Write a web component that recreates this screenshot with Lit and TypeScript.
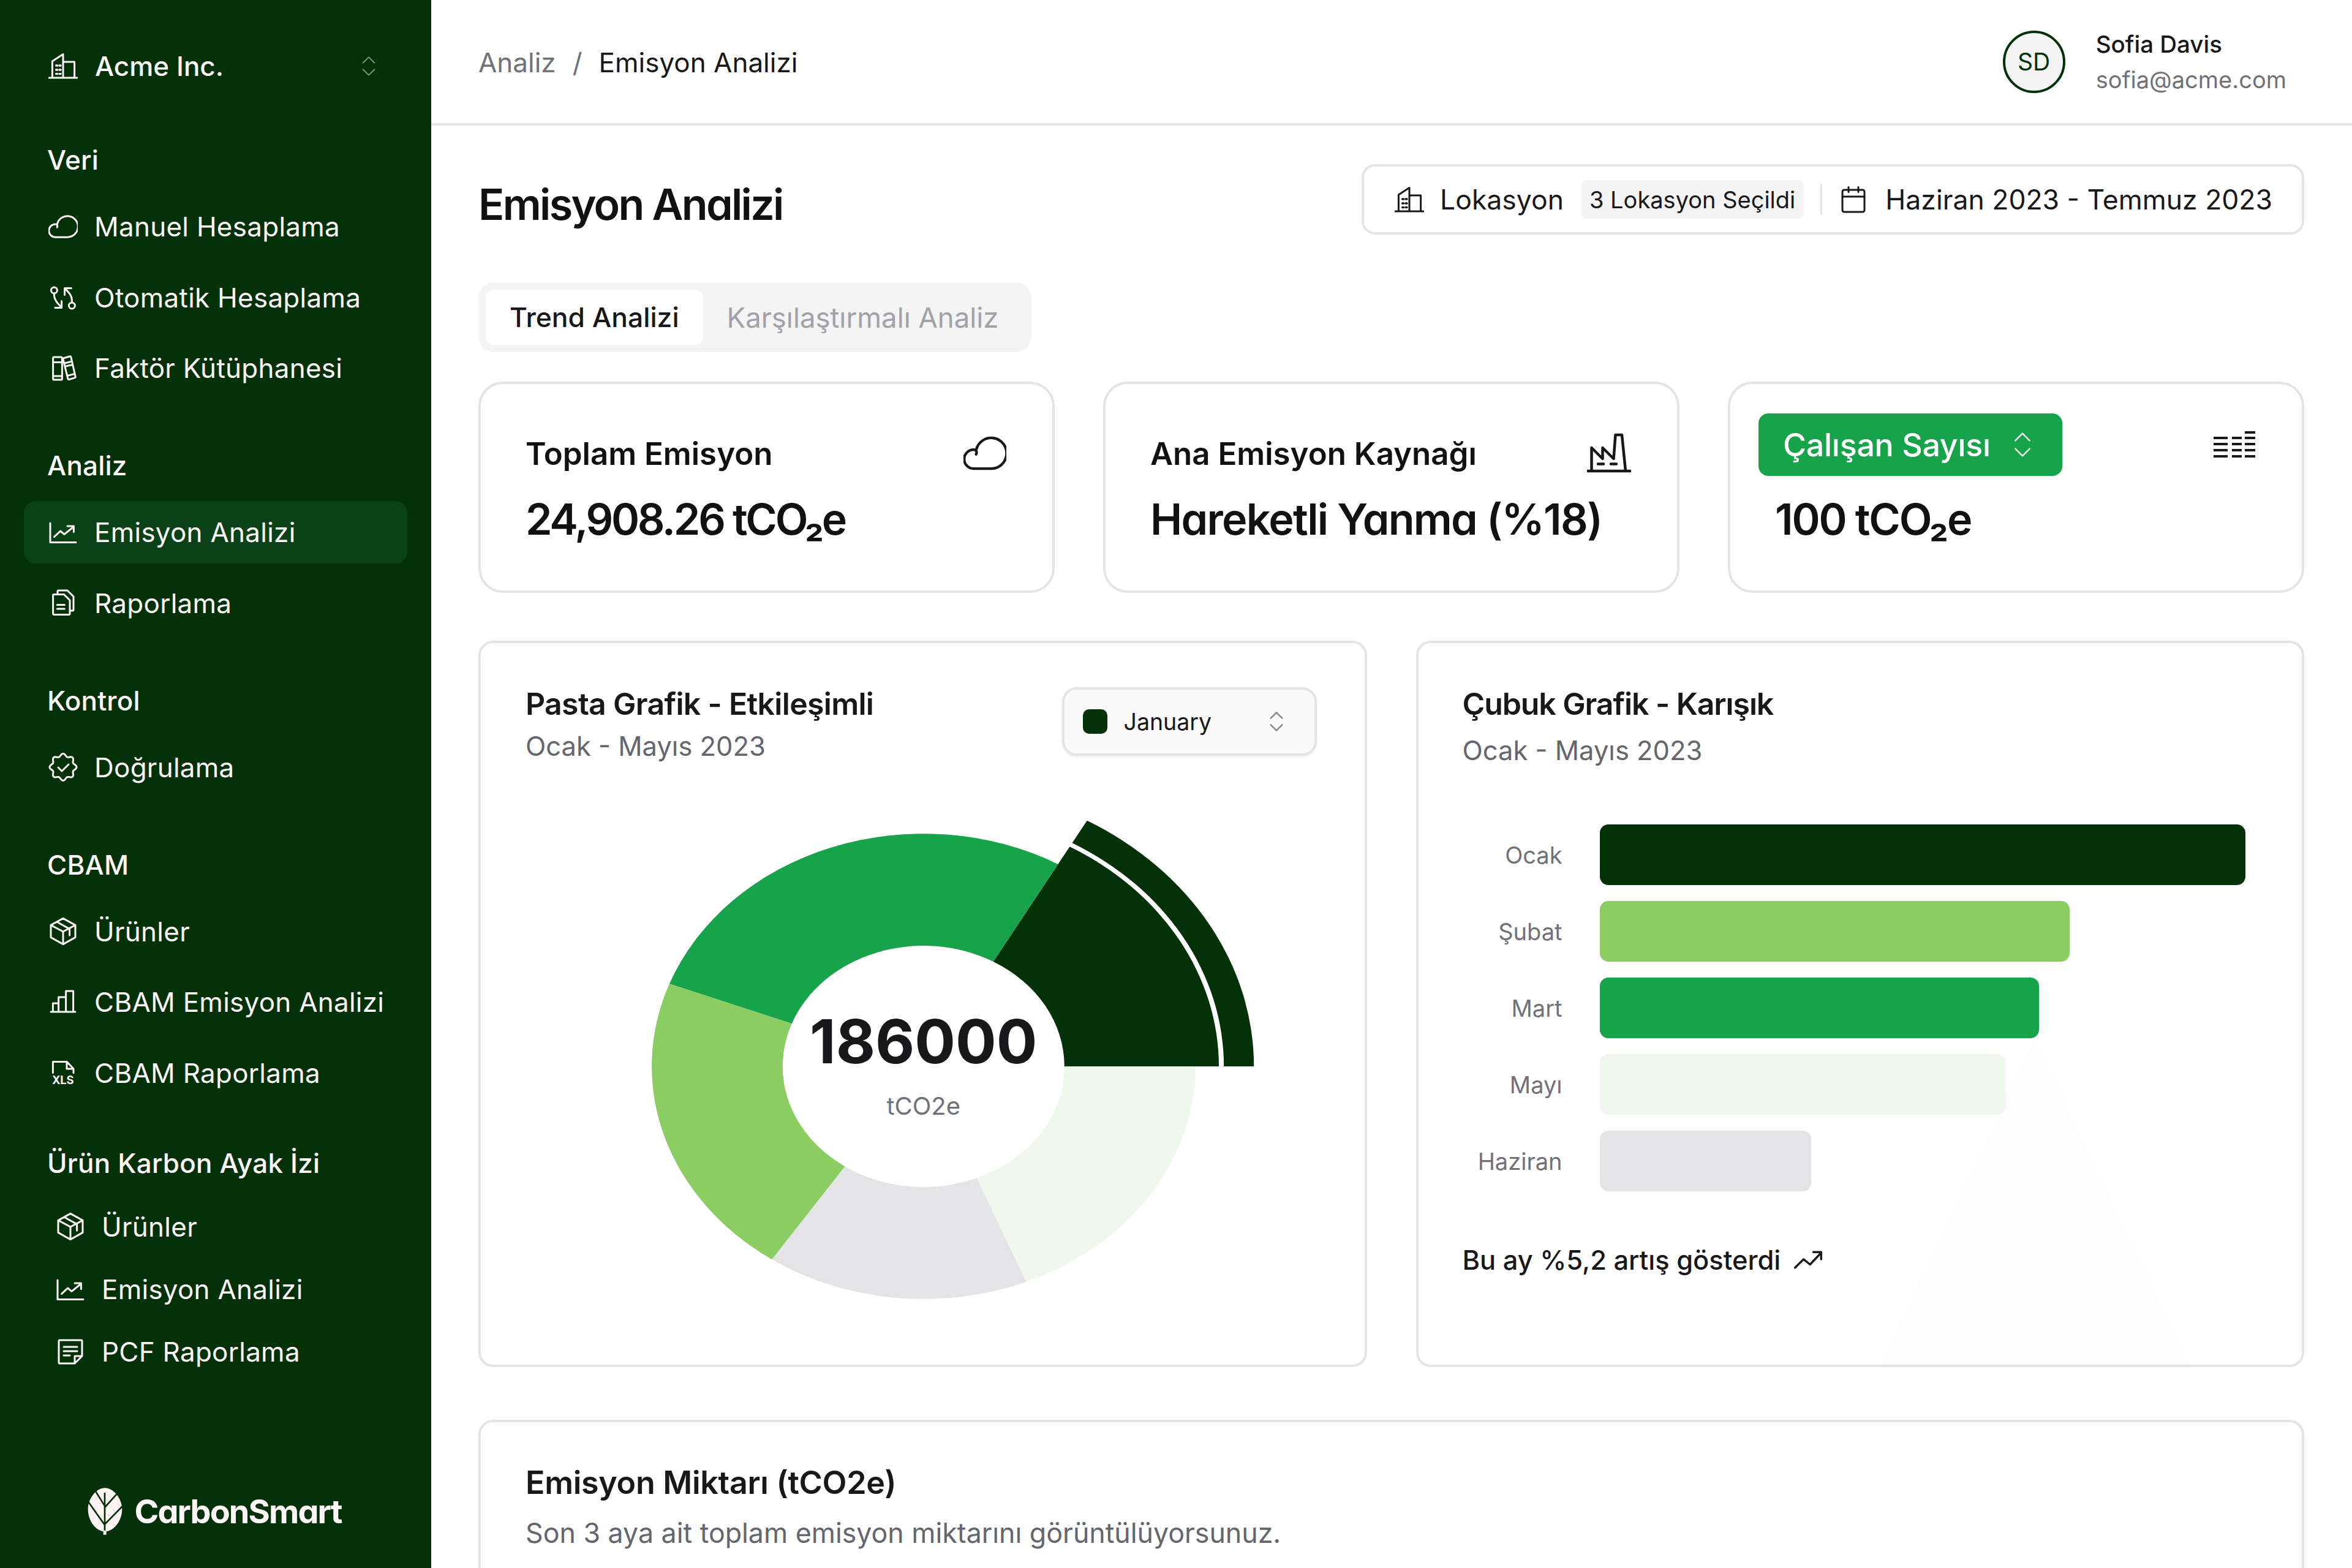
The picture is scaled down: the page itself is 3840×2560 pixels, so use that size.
import { LitElement, html, css, svg } from "lit";
import { customElement } from "lit/decorators.js";

// wavy 8-lobe outline for the verification badge
function badgePath() {
  const pts: string[] = [];
  for (let i = 0; i < 96; i++) {
    const t = (i / 96) * Math.PI * 2;
    const r = 9.9 + 1.1 * Math.cos(8 * t);
    pts.push(`${(12 + r * Math.sin(t)).toFixed(2)} ${(11.7 - r * Math.cos(t)).toFixed(2)}`);
  }
  return `M${pts.join("L")}Z`;
}

const ICONS: Record<string, any> = {
  building: svg`<path d="M.5 21.5h23M3.2 21.5V8L12 2.300v19.200M12 8.500h9.300v13"/><path d="M6.300 11.500h1M9 11.500h1M6.300 15h1M9 15h1M6.300 18.300h1M9 18.300h1" stroke-width="1.700"/>`,
  cloud: svg`<path d="M5.700 20.600h9.800A8.600 8.600 0 1 0 7.200 9.900M5.700 20.600a5.300 5.300 0 0 1 0-10.600c1.500 0 2 1.200 1.400 2.600"/>`,
  flow: svg`<circle cx="4.700" cy="6" r="2.500"/><path d="M4.700 8.500V10c0 4 3.300 7 6.100 10M5.500 20.300h5.300v-5.500"/><circle cx="19.200" cy="18.500" r="2.500"/><path d="M19.200 16v-2c0-4-3.200-7-5.900-9.700M18.700 4.300h-5.400v5.500"/>`,
  books: svg`<rect x="3.800" y="3" width="7.400" height="18.500" rx=".8"/><path d="M3.800 7.200h7.400M3.800 18.500h7.400M12.400 3.900l5.200-1.500q.6-.1.8.4l3.700 16.200q.1.6-.4.8l-4.900 1.500q-.6.1-.8-.4L12 4.700q-.1-.6.400-.8zM13.300 8l6-1.500M13.800 10.600l6-1.500M15.700 18.200l5.600-1.500"/>`,
  chart: svg`<path d="M1.500 4.500V20.200h21M4.800 15.700l5-4.700 3.200 2.700 7-5.700M15.500 7h5.200v4.700"/>`,
  docs: svg`<path d="M4.500 4.800h8.300l4.700 4.700v11a.7.7 0 0 1-.7.7H4.500a.7.7 0 0 1-.7-.7V5.500a.7.7 0 0 1 .7-.7zM7.500 4.800V2.200a.7.7 0 0 1 .7-.7h7.300l5 5v10.800a.7.7 0 0 1-.7.7h-2.300M7.200 13.200h6M7.200 16.500h6"/>`,
  badge: svg`<path d=${badgePath()}/><path d="M8 12l3 3 5.500-5.500"/>`,
  box: svg`<path d="M12 1.200 22 6.700v10L12 22.300 2 16.700v-10zM2 6.700 12 12l10-5.300M12 12v10.300M6.800 4l10.500 5.800V15"/>`,
  bars: svg`<path d="M2 20h20M3.700 20v-7h4.600v7M8.300 20V8h6v12M14.300 20V3h6v17"/>`,
  xls: svg`<path d="M3.700 11.800V2.700H15l5.500 5.800v3.300M15 2.700v5.800h5.500"/><text x="12" y="21" text-anchor="middle" textLength="18" font-size="9.200" font-weight="700" font-family="Inter, sans-serif" fill="currentColor" stroke="none">XLS</text>`,
  note: svg`<path d="M3.200 2.500h17.600a.7.7 0 0 1 .7.700v12.300l-6 6H3.200a.7.7 0 0 1-.7-.7V3.200a.7.7 0 0 1 .7-.7zM15.500 21.500v-6h6M6.500 8h11M6.500 11.500h11M6.500 15h5"/>`,
  calendar: svg`<rect x="3" y="4" width="18" height="18" rx="1.500"/><path d="M3 9.500h18M8 1.800v4M16 1.800v4"/>`,
  factory: svg`<path d="M.5 21.700h23M2.500 21.700V9l6 6V9l6 6 1-13h3.500l2 19.700M6 17.800h3M13 17.800h3"/>`,
  updown: svg`<path d="M5 8l7-7 7 7M5 16l7 7 7-7"/>`,
};

function icon(name: string, cls = "ico") {
  return html`<svg class=${cls} viewBox="0 0 24 24" fill="none" stroke="currentColor" stroke-width="1.5" stroke-linejoin="round" stroke-linecap="round">${ICONS[name]}</svg>`;
}

type NavItem = { icon: string; label: string; active?: boolean };
type NavGroup = { label: string; cls: string; nested?: boolean; items: NavItem[] };

const NAV: NavGroup[] = [
  { label: "Veri", cls: "g-veri", items: [
    { icon: "cloud", label: "Manuel Hesaplama" },
    { icon: "flow", label: "Otomatik Hesaplama" },
    { icon: "books", label: "Faktör Kütüphanesi" },
  ] },
  { label: "Analiz", cls: "g-std", items: [
    { icon: "chart", label: "Emisyon Analizi", active: true },
    { icon: "docs", label: "Raporlama" },
  ] },
  { label: "Kontrol", cls: "g-std", items: [{ icon: "badge", label: "Doğrulama" }] },
  { label: "CBAM", cls: "g-std", items: [
    { icon: "box", label: "Ürünler" },
    { icon: "bars", label: "CBAM Emisyon Analizi" },
    { icon: "xls", label: "CBAM Raporlama" },
  ] },
  { label: "Ürün Karbon Ayak İzi", cls: "g-pcf", nested: true, items: [
    { icon: "box", label: "Ürünler" },
    { icon: "chart", label: "Emisyon Analizi" },
    { icon: "note", label: "PCF Raporlama" },
  ] },
];

const PIE = [
  { v: 186, c: "#033107" },
  { v: 305, c: "#16a34a" },
  { v: 237, c: "#8bcd63" },
  { v: 173, c: "#e4e4e7" },
  { v: 209, c: "#f0f7ec" },
];

const BARS = [
  { m: "Ocak", v: 275, c: "#033107" },
  { m: "Şubat", v: 200, c: "#8bcd63" },
  { m: "Mart", v: 187, c: "#16a34a" },
  { m: "Mayı", v: 173, c: "#f0f7ec" },
  { m: "Haziran", v: 90, c: "#e4e4e7" },
];

function sector(r0: number, r1: number, a0: number, a1: number) {
  const p = (r: number, a: number) => {
    const t = (a * Math.PI) / 180;
    return `${(r * Math.cos(t)).toFixed(2)} ${(-r * Math.sin(t)).toFixed(2)}`;
  };
  const large = a1 - a0 > 180 ? 1 : 0;
  return `M${p(r1, a0)}A${r1} ${r1} 0 ${large} 0 ${p(r1, a1)}L${p(r0, a1)}A${r0} ${r0} 0 ${large} 1 ${p(r0, a0)}Z`;
}

@customElement("app-root")
export class AppRoot extends LitElement {
  static styles = css`
    :host {
      display: flex;
      width: 3840px;
      height: 2560px;
      overflow: hidden;
      background: #fff;
      font-family: Inter, "Noto Sans", sans-serif;
      color: #18181b;
    }
    .ico { width: 48px; height: 48px; flex: none; }

    .side {
      width: 704px;
      flex: none;
      background: #033107;
      color: #fdf6f6;
      display: flex;
      flex-direction: column;
      padding-top: 57px;
      box-sizing: border-box;
    }
    .org {
      height: 102px;
      margin: 0 39px;
      padding: 0 40px;
      display: flex;
      align-items: center;
      gap: 28px;
      font-size: 44px;
      font-weight: 500;
    }
    .org .chev { width: 32px; height: 32px; margin-left: auto; margin-right: 7px; opacity: .5; }
    .group { display: flex; flex-direction: column; }
    .g-veri { margin-top: 72px; }
    .g-std { margin-top: 78px; }
    .g-pcf { margin-top: 66px; }
    .glabel {
      height: 60px;
      line-height: 60px;
      padding-left: 77px;
      font-size: 44px;
      font-weight: 500;
      letter-spacing: .2px;
      margin-bottom: 28px;
    }
    .rows { display: flex; flex-direction: column; gap: 13.5px; }
    .row {
      height: 102px;
      margin: 0 39px;
      padding: 0 40px;
      border-radius: 20px;
      display: flex;
      align-items: center;
      gap: 27px;
      font-size: 44px;
      letter-spacing: .25px;
      white-space: nowrap;
    }
    .row.active { background: #0a4217; }
    .nested .rows { gap: 22px; }
    .nested .glabel { margin-bottom: 34px; }
    .nested .row { height: 80px; padding-left: 52px; }
    .logo {
      margin-top: auto;
      margin-bottom: 53px;
      padding-right: 4px;
      display: flex;
      justify-content: center;
      align-items: center;
      gap: 18px;
      font-size: 54px;
      font-weight: 700;
      letter-spacing: -1.9px;
      font-feature-settings: "cv11";
    }
    .logo svg { width: 59px; height: 80px; }

    .main { flex: 1; min-width: 0; display: flex; flex-direction: column; }
    .top {
      height: 205px;
      flex: none;
      box-sizing: border-box;
      border-bottom: 4px solid #e4e4e7;
      padding: 0 78px 0 77px;
      display: flex;
      align-items: center;
      justify-content: space-between;
    }
    .crumbs { display: flex; gap: 27px; font-size: 44px; color: #71717a; padding-top: 2px; }
    .crumbs b { font-weight: 400; color: #18181b; }
    .user { display: flex; align-items: center; gap: 50px; margin-right: 29px; }
    .avatar {
      width: 102px;
      height: 102px;
      box-sizing: border-box;
      border: 4px solid #033107;
      border-radius: 50%;
      background: #f4f4f5;
      color: #033107;
      font-size: 39px;
      display: flex;
      align-items: center;
      justify-content: center;
    }
    .uinfo { padding-top: 4px; }
    .uname { font-size: 38.5px; font-weight: 500; line-height: 50px; }
    .umail { font-size: 38px; line-height: 58px; color: #71717a; margin-top: 4px; }

    .page { flex: 1; padding: 65px 78px 0 77px; display: flex; flex-direction: column; }
    .head { height: 113px; display: flex; align-items: center; justify-content: space-between; }
    h1 {
      margin: 0;
      padding-top: 14px;
      font-size: 70px;
      font-weight: 600;
      letter-spacing: -2.7px;
      color: #111;
      font-feature-settings: "cv11";
    }
    .filter {
      height: 115px;
      align-self: flex-start;
      margin-top: -2px;
      box-sizing: border-box;
      border: 4px solid #e4e4e7;
      border-radius: 22px;
      padding: 0 48px 0 50px;
      display: flex;
      align-items: center;
      font-size: 44.5px;
      white-space: nowrap;
    }
    .filter .ico { width: 48px; height: 48px; }
    .filter .t { margin-left: 26px; }
    .filter .d { margin-left: 28px; }
    .chip {
      margin-left: 28px;
      height: 63px;
      padding: 0 14px;
      display: flex;
      align-items: center;
      border-radius: 10px;
      background: #f4f4f5;
      font-size: 38px;
    }
    .vr { width: 3px; height: 51px; background: #e4e4e7; margin: 0 27px 0 27px; }

    .tabs {
      align-self: flex-start;
      margin-top: 78px;
      height: 114px;
      box-sizing: border-box;
      padding: 12px;
      border-radius: 26px;
      background: #f4f4f5;
      display: flex;
    }
    .tab { display: flex; align-items: center; }
    .tab.on {
      padding: 0 39px;
      background: #fff;
      border-radius: 13px;
      color: #18181b;
      font-size: 44.4px;
      font-weight: 500;
    }
    .tab.off { padding: 0 42px 0 39px; color: #a1a1aa; font-size: 45.5px; }

    .stats { margin-top: 48px; display: grid; grid-template-columns: repeat(3, minmax(0, 1fr)); gap: 79px; }
    .stat {
      height: 345px;
      box-sizing: border-box;
      border: 4px solid #e4e4e7;
      border-radius: 40px;
      padding: 83px 75px 0 73px;
      white-space: nowrap;
    }
    .stat.alt { padding: 48px 76px 0 46px; }
    .stat-top { display: flex; align-items: center; justify-content: space-between; height: 60px; }
    .stat.alt .stat-top { height: 102px; }
    .stat-title { font-size: 51px; font-weight: 600; color: #111; }
    .stat-val {
      margin-top: 38px;
      font-size: 70px;
      line-height: 80px;
      font-weight: 600;
      color: #111;
      font-feature-settings: "cv11";
    }
    .v1 { letter-spacing: -3.3px; }
    .v2 { letter-spacing: -1.7px; }
    .v3 { letter-spacing: -2.2px; }
    .stat.alt .stat-val { margin-top: 31px; margin-left: 27px; }
    .cloud { width: 70px; height: 70px; }
    .factory { width: 72px; height: 72px; }
    .levels { width: 68px; height: 44px; }
    .pill {
      height: 102px;
      box-sizing: border-box;
      padding: 0 45px 0 40px;
      display: flex;
      align-items: center;
      gap: 32px;
      border-radius: 16px;
      background: #16a34a;
      color: #fff;
      font-size: 52px;
      font-weight: 500;
      letter-spacing: -.3px;
    }
    .pill svg { width: 40px; height: 40px; stroke-width: 1.4; }

    .charts { margin-top: 78px; display: flex; gap: 80px; }
    .panel {
      flex: 1 1 0;
      min-width: 0;
      height: 1186px;
      box-sizing: border-box;
      border: 4px solid #e4e4e7;
      border-radius: 24px;
      padding-top: 69px;
      display: flex;
      flex-direction: column;
      position: relative;
    }
    .ptitle { font-size: 50px; line-height: 60px; font-weight: 600; color: #18181b; }
    .psub { font-size: 43.5px; line-height: 60px; color: #63666e; margin-top: 9px; }
    .phead { padding: 0 78px 0 73px; display: flex; justify-content: space-between; align-items: flex-start; height: 128px; }
    .phead .ptitle { letter-spacing: -.7px; }
    .select {
      margin-top: 3px;
      width: 416px;
      height: 112px;
      box-sizing: border-box;
      border: 4px solid #e4e4e7;
      border-radius: 24px;
      background: #fafafa;
      box-shadow: 0 2px 4px rgba(0, 0, 0, .08);
      padding: 0 46px 0 30px;
      display: flex;
      align-items: center;
      gap: 27px;
      font-size: 37.5px;
    }
    .swatch { width: 40px; height: 40px; border-radius: 10px; background: #033107; }
    .select svg { width: 32px; height: 32px; margin-left: auto; color: #8a8a92; stroke-width: 2; }
    .donut { display: block; width: 100%; height: 860px; margin-top: 52px; }
    .d-num { font-family: Inter, sans-serif; font-size: 99px; font-weight: 700; fill: #18181b; }
    .d-unit { font-family: Inter, sans-serif; font-size: 40px; fill: #71717a; }

    .bar-head { padding: 0 0 0 72px; }
    .bar-head .ptitle { letter-spacing: -1.1px; }
    .bar-head .psub { margin-top: 16px; }
    .bars { position: relative; margin-top: 91px; display: flex; flex-direction: column; gap: 26px; }
    .bar-row { display: flex; align-items: center; gap: 61px; }
    .bar-label { width: 235px; text-align: right; font-size: 38px; color: #71717a; }
    .bar { height: 99px; border-radius: 14px; }
    .bar-foot {
      position: relative;
      margin: 82px 0 0 72px;
      display: flex;
      align-items: center;
      gap: 20px;
      height: 60px;
      font-size: 43.4px;
      font-weight: 500;
    }
    .bar-foot svg { width: 50px; height: 32px; }
    .ghost {
      position: absolute;
      left: 754px;
      bottom: 0;
      width: 505px;
      height: 534px;
      clip-path: polygon(50% 0, 100% 100%, 0 100%);
      background: #fcfdfc;
    }

    .table {
      margin-top: 86px;
      flex: none;
      height: 400px;
      box-sizing: border-box;
      border: 4px solid #e4e4e7;
      border-radius: 24px;
      padding: 69px 73px 0;
    }
    .table .ptitle { font-size: 52px; letter-spacing: -.3px; }
    .table .psub { margin-top: 22px; font-size: 44.7px; }
  `;

  private renderDonut() {
    const total = PIE.reduce((s, d) => s + d.v, 0);
    let a = 0;
    const parts = PIE.map((d, i) => {
      const a0 = a;
      a += (d.v / total) * 360;
      return svg`<path fill=${d.c} d=${sector(197, i === 0 ? 413 : 380, a0, a)}></path>`;
    });
    const end = (PIE[0].v / total) * 360;
    return html`<svg class="donut" viewBox="0 0 1443 860">
      <g transform="translate(723 442) scale(1.168 1)">
        ${parts}
        <path fill="#033107" d=${sector(420, 462, 0, end)}></path>
      </g>
      <text class="d-num" x="723" y="437" text-anchor="middle">186000</text>
      <text class="d-unit" x="723" y="521" text-anchor="middle">tCO2e</text>
    </svg>`;
  }

  render() {
    return html`
      <aside class="side">
        <div class="org">${icon("building")}<span>Acme Inc.</span>${icon("updown", "chev")}</div>
        ${NAV.map(g => html`
          <section class="group ${g.cls} ${g.nested ? "nested" : ""}">
            <div class="glabel">${g.label}</div>
            <div class="rows">
              ${g.items.map(it => html`<div class="row ${it.active ? "active" : ""}">${icon(it.icon)}<span>${it.label}</span></div>`)}
            </div>
          </section>`)}
        <div class="logo">
          <svg viewBox="40 30 177 240">
            <path fill="#fdf3f3" d="M120 248h15v18h-15zM128 37c42 0 84 53 84 103 0 60-42 110-84 110-43 0-83-50-83-110 0-50 40-103 83-103z"></path>
            <path fill="none" stroke="#033107" stroke-width="8" d="M127 60v185M127 125 80 50M127 132 185 68M127 218 45 103M127 215l88-90"></path>
          </svg>
          <span>CarbonSmart</span>
        </div>
      </aside>
      <div class="main">
        <header class="top">
          <div class="crumbs"><span>Analiz</span><span>/</span><b>Emisyon Analizi</b></div>
          <div class="user">
            <div class="avatar">SD</div>
            <div class="uinfo">
              <div class="uname">Sofia Davis</div>
              <div class="umail">sofia@acme.com</div>
            </div>
          </div>
        </header>
        <div class="page">
          <div class="head">
            <h1>Emisyon Analizi</h1>
            <div class="filter">
              ${icon("building")}<span class="t">Lokasyon</span>
              <span class="chip">3 Lokasyon Seçildi</span>
              <span class="vr"></span>
              ${icon("calendar")}<span class="d">Haziran 2023 - Temmuz 2023</span>
            </div>
          </div>
          <div class="tabs">
            <div class="tab on">Trend Analizi</div>
            <div class="tab off">Karşılaştırmalı Analiz</div>
          </div>
          <div class="stats">
            <div class="stat">
              <div class="stat-top"><span class="stat-title">Toplam Emisyon</span>${icon("cloud", "cloud")}</div>
              <div class="stat-val v1">24,908.26 tCO₂e</div>
            </div>
            <div class="stat">
              <div class="stat-top"><span class="stat-title">Ana Emisyon Kaynağı</span>${icon("factory", "factory")}</div>
              <div class="stat-val v2">Hareketli Yanma (%18)</div>
            </div>
            <div class="stat alt">
              <div class="stat-top">
                <div class="pill"><span>Çalışan Sayısı</span>${icon("updown", "")}</div>
                <svg class="levels" viewBox="0 0 68 44" stroke="#18181b" stroke-width="4">
                  ${[11, 21, 31, 41].map(y => svg`<path d="M0 ${y}h23M30 ${y}h16"></path>`)}
                  ${[2, 11, 21, 31, 41].map(y => svg`<path d="M51 ${y}h17"></path>`)}
                </svg>
              </div>
              <div class="stat-val v3">100 tCO₂e</div>
            </div>
          </div>
          <div class="charts">
            <div class="panel">
              <div class="phead">
                <div>
                  <div class="ptitle">Pasta Grafik - Etkileşimli</div>
                  <div class="psub">Ocak - Mayıs 2023</div>
                </div>
                <div class="select"><span class="swatch"></span><span>January</span>${icon("updown", "")}</div>
              </div>
              ${this.renderDonut()}
            </div>
            <div class="panel">
              <div class="ghost"></div>
              <div class="bar-head">
                <div class="ptitle">Çubuk Grafik - Karışık</div>
                <div class="psub">Ocak - Mayıs 2023</div>
              </div>
              <div class="bars">
                ${BARS.map(b => html`<div class="bar-row">
                  <span class="bar-label">${b.m}</span>
                  <div class="bar" style="width:${(b.v * 3.833).toFixed(0)}px;background:${b.c}"></div>
                </div>`)}
              </div>
              <div class="bar-foot">
                <span>Bu ay %5,2 artış gösterdi</span>
                <svg viewBox="1 3 22 15" fill="none" stroke="#18181b" stroke-width="1.600" stroke-linecap="round" stroke-linejoin="round">
                  <path d="M2 16.500l6.500-6.500 5 4L22 5M16 4.500h6V10"></path>
                </svg>
              </div>
            </div>
          </div>
          <div class="table">
            <div class="ptitle">Emisyon Miktarı (tCO2e)</div>
            <div class="psub">Son 3 aya ait toplam emisyon miktarını görüntülüyorsunuz.</div>
          </div>
        </div>
      </div>
    `;
  }
}
